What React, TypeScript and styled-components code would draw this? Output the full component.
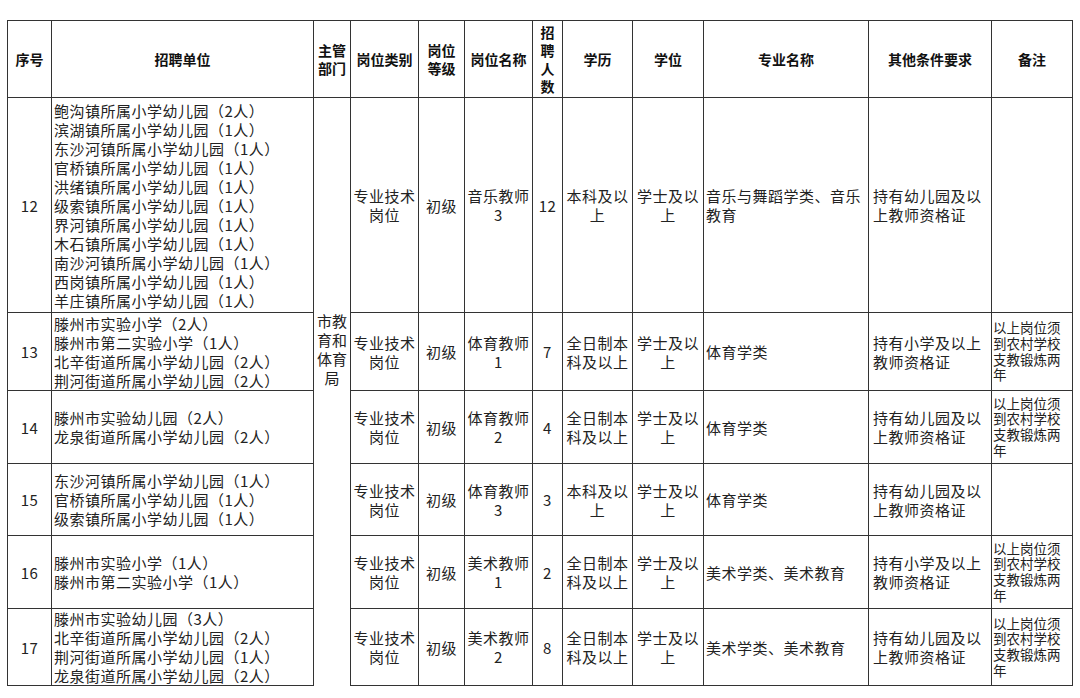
import React from 'react';
import styled, { createGlobalStyle } from 'styled-components';

const GlobalStyle = createGlobalStyle`
    html, body {
        margin: 0;
        padding: 0;
        background: #ffffff;
    }
    body {
        font-family: "Noto Sans CJK SC", "Noto Sans", sans-serif;
        color: #1c1c1c;
    }
`;

type Post = {
    no: number;
    units: string[];
    title: string;
    count: number;
    edu: string;
    major: string;
    cond: string;
    note?: boolean;
    height: number;
};

const NOTE = '以上岗位须到农村学校支教锻炼两年';

const posts: Post[] = [
    {
        no: 12,
        units: [
            '鲍沟镇所属小学幼儿园（2人）',
            '滨湖镇所属小学幼儿园（1人）',
            '东沙河镇所属小学幼儿园（1人）',
            '官桥镇所属小学幼儿园（1人）',
            '洪绪镇所属小学幼儿园（1人）',
            '级索镇所属小学幼儿园（1人）',
            '界河镇所属小学幼儿园（1人）',
            '木石镇所属小学幼儿园（1人）',
            '南沙河镇所属小学幼儿园（1人）',
            '西岗镇所属小学幼儿园（1人）',
            '羊庄镇所属小学幼儿园（1人）',
        ],
        title: '音乐教师3',
        count: 12,
        edu: '本科及以上',
        major: '音乐与舞蹈学类、音乐教育',
        cond: '持有幼儿园及以上教师资格证',
        height: 215,
    },
    {
        no: 13,
        units: [
            '滕州市实验小学（2人）',
            '滕州市第二实验小学（1人）',
            '北辛街道所属小学幼儿园（2人）',
            '荆河街道所属小学幼儿园（2人）',
        ],
        title: '体育教师1',
        count: 7,
        edu: '全日制本科及以上',
        major: '体育学类',
        cond: '持有小学及以上教师资格证',
        note: true,
        height: 78,
    },
    {
        no: 14,
        units: ['滕州市实验幼儿园（2人）', '龙泉街道所属小学幼儿园（2人）'],
        title: '体育教师2',
        count: 4,
        edu: '全日制本科及以上',
        major: '体育学类',
        cond: '持有幼儿园及以上教师资格证',
        note: true,
        height: 73,
    },
    {
        no: 15,
        units: [
            '东沙河镇所属小学幼儿园（1人）',
            '官桥镇所属小学幼儿园（1人）',
            '级索镇所属小学幼儿园（1人）',
        ],
        title: '体育教师3',
        count: 3,
        edu: '本科及以上',
        major: '体育学类',
        cond: '持有幼儿园及以上教师资格证',
        height: 72,
    },
    {
        no: 16,
        units: ['滕州市实验小学（1人）', '滕州市第二实验小学（1人）'],
        title: '美术教师1',
        count: 2,
        edu: '全日制本科及以上',
        major: '美术学类、美术教育',
        cond: '持有小学及以上教师资格证',
        note: true,
        height: 73,
    },
    {
        no: 17,
        units: [
            '滕州市实验幼儿园（3人）',
            '北辛街道所属小学幼儿园（2人）',
            '荆河街道所属小学幼儿园（1人）',
            '龙泉街道所属小学幼儿园（2人）',
        ],
        title: '美术教师2',
        count: 8,
        edu: '全日制本科及以上',
        major: '美术学类、美术教育',
        cond: '持有幼儿园及以上教师资格证',
        note: true,
        height: 76,
    },
];

const colWidths = [44, 262, 37, 68, 46, 68, 30, 70, 71, 165, 123, 81];

const headers = [
    '序号', '招聘单位', '主管部门', '岗位类别', '岗位等级', '岗位名称',
    '招聘人数', '学历', '学位', '专业名称', '其他条件要求', '备注',
];

function App() {
    return (
        <>
            <GlobalStyle />
            <Page>
                <Sheet>
                    <colgroup>
                        {colWidths.map((w, i) => (
                            <col key={i} style={{ width: w }} />
                        ))}
                    </colgroup>
                    <thead>
                        <HeadRow>
                            {headers.map((h) => (
                                <HeadCell key={h}>{h}</HeadCell>
                            ))}
                        </HeadRow>
                    </thead>
                    <tbody>
                        {posts.map((p, i) => (
                            <Row key={p.no} style={{ height: p.height }}>
                                <Cell>{p.no}</Cell>
                                <Cell $align="left">
                                    {p.units.map((u) => (
                                        <UnitLine key={u}>{u}</UnitLine>
                                    ))}
                                </Cell>
                                {i === 0 && (
                                    <DeptCell rowSpan={posts.length}>市教育和体育局</DeptCell>
                                )}
                                <Cell>专业技术岗位</Cell>
                                <Cell>初级</Cell>
                                <Cell>{p.title}</Cell>
                                <Cell>{p.count}</Cell>
                                <Cell>{p.edu}</Cell>
                                <Cell>学士及以上</Cell>
                                <Cell $align="left">{p.major}</Cell>
                                <Cell $align="left" $pad={4}>{p.cond}</Cell>
                                <NoteCell>{p.note ? NOTE : ''}</NoteCell>
                            </Row>
                        ))}
                    </tbody>
                </Sheet>
            </Page>
        </>
    );
}

const Page = styled.div`
    padding: 20px 0 0 7px;
`;

const Sheet = styled.table`
    width: 1065px;
    table-layout: fixed;
    border-collapse: collapse;
    font-size: 15px;
    line-height: 19px;
`;

const HeadRow = styled.tr`
    height: 77px;
`;

const HeadCell = styled.th`
    border: 1px solid #333;
    padding: 0 3px;
    font-size: 14px;
    line-height: 18px;
    font-weight: 700;
    color: #111;
    text-align: center;
    vertical-align: middle;
`;

const Row = styled.tr``;

const Cell = styled.td<{ $align?: 'left' | 'center'; $pad?: number }>`
    border: 1px solid #333;
    padding: 0 ${(p) => p.$pad ?? 2}px;
    text-align: ${(p) => p.$align ?? 'center'};
    vertical-align: middle;
    color: #222;
    letter-spacing: 0.5px;
    word-break: break-all;
`;

const DeptCell = styled.td`
    border: 1px solid #333;
    border-bottom: hidden;
    padding: 0 3px 86px;
    text-align: center;
    vertical-align: middle;
    color: #222;
`;

const NoteCell = styled.td`
    border: 1px solid #333;
    padding: 0 1px;
    font-size: 13.5px;
    line-height: 15.6px;
    text-align: left;
    vertical-align: middle;
    color: #222;
`;

const UnitLine = styled.div`
    white-space: nowrap;
`;

export default App;
